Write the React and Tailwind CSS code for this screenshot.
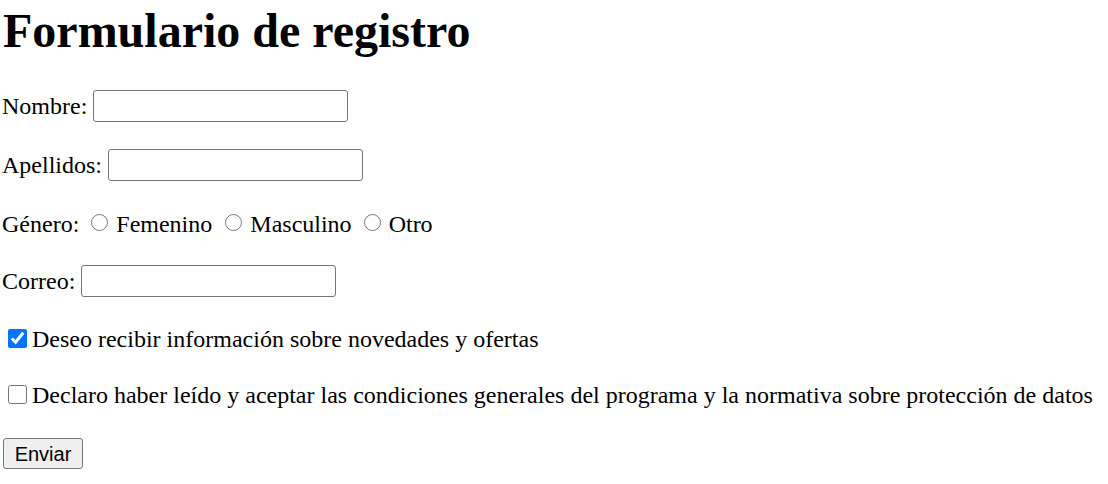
import React from 'react';

const serif = { fontFamily: '"Liberation Serif", "Times New Roman", serif' };

const TextRow = ({ label, className }) => (
  <div className={`flex items-center h-[32px] gap-[6px] ${className}`}>
    <span>{label}</span>
    <input
      type="text"
      className="w-[255px] h-[32px] border border-[#767676] rounded-[3px] bg-white px-[3px] text-[20px]"
    />
  </div>
);

const Radio = ({ label, className }) => (
  <label className={`flex items-center ${className}`}>
    <input type="radio" name="genero" className="w-[17px] h-[17px] m-0 mt-[-3px]" />
    <span className="ml-[8px]">{label}</span>
  </label>
);

const Check = ({ label, checked, className }) => (
  <label className={`flex items-center h-[32px] ${className}`}>
    <input
      type="checkbox"
      defaultChecked={checked}
      className="w-[19px] h-[19px] ml-[6px] mt-[-1px]"
    />
    <span className="ml-[5px]">{label}</span>
  </label>
);

const App = () => {
  return (
    <div className="min-h-screen bg-white text-black text-[24px] pl-[2px]" style={serif}>
      <h1 className="text-[48px] font-bold leading-[55px] pt-[3px] pl-[1px]">Formulario de registro</h1>

      <form className="flex flex-col" onSubmit={(e) => e.preventDefault()}>
        <TextRow label="Nombre:" className="mt-[32px]" />
        <TextRow label="Apellidos:" className="mt-[27px]" />

        <div className="flex items-center h-[32px] mt-[27px]">
          <span>Género:</span>
          <Radio label="Femenino" className="ml-[12px]" />
          <Radio label="Masculino" className="ml-[13px]" />
          <Radio label="Otro" className="ml-[12px]" />
        </div>

        <TextRow label="Correo:" className="mt-[25px]" />

        <Check
          checked
          label="Deseo recibir información sobre novedades y ofertas"
          className="mt-[26px]"
        />
        <Check
          label="Declaro haber leído y aceptar las condiciones generales del programa y la normativa sobre protección de datos"
          className="mt-[24px]"
        />

        <div className="flex mt-[27px]">
          <button
            type="submit"
            className="w-[80px] h-[31px] ml-[1px] border border-[#767676] rounded-[3px] bg-[#efefef] text-[20px] leading-none"
            style={{ fontFamily: '"Liberation Sans", Arial, sans-serif' }}
          >
            Enviar
          </button>
        </div>
      </form>
    </div>
  );
};

export default App;
